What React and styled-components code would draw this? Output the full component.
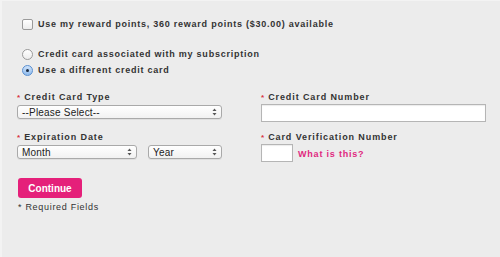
import React from "react";
import styled, { createGlobalStyle } from "styled-components";

const Global = createGlobalStyle`
  html, body { margin: 0; padding: 0; background: #ececec; }
  * { box-sizing: border-box; }
`;

const Page = styled.div`
  width: 500px;
  height: 257px;
  background: #ececec;
  border-left: 2px solid #f3f3f3;
  border-top: 1px solid #f3f3f3;
  padding: 17px 14px 0 15px;
  font-family: "Liberation Sans", Arial, sans-serif;
  color: #333;
  overflow: hidden;
`;

const OptionRow = styled.label`
  display: flex;
  align-items: center;
  height: 12px;
  padding-left: 5px;
  margin-top: ${(p) => p.$mt || 0}px;
  font-size: 9px;
  font-weight: bold;
  letter-spacing: 0.76px;
  color: #333;
  gap: 5px;
`;

const Box = styled.span`
  width: 11px;
  height: 11px;
  border: 1px solid #9a9a9a;
  border-radius: 2px;
  background: linear-gradient(#ffffff, #ececec);
  flex: none;
`;

const Radio = styled.span`
  width: 11px;
  height: 11px;
  border-radius: 50%;
  flex: none;
  display: flex;
  align-items: center;
  justify-content: center;
  border: 1px solid ${(p) => (p.$on ? "#5a8fd0" : "#9a9a9a")};
  background: ${(p) => (p.$on ? "linear-gradient(#cfe3fa, #8fbbed)" : "linear-gradient(#ffffff, #ececec)")};
  &::after {
    content: "";
    display: ${(p) => (p.$on ? "block" : "none")};
    width: 3px;
    height: 3px;
    border-radius: 50%;
    background: #1d2d44;
  }
`;

const Grid = styled.div`
  display: grid;
  grid-template-columns: 205px 225px;
  column-gap: 39px;
  margin-top: 15px;
`;

const Column = styled.div`
  display: flex;
  flex-direction: column;
`;

const Label = styled.div`
  height: 12px;
  line-height: 12px;
  margin-top: ${(p) => p.$mt || 0}px;
  font-size: 9px;
  font-weight: bold;
  letter-spacing: 0.9px;
  color: #333;
  white-space: nowrap;
`;

const Star = styled.span`
  color: #d8333f;
  font-size: 8px;
  margin-right: 4px;
  letter-spacing: 0;
`;

const SelectBox = styled.div`
  display: flex;
  align-items: center;
  justify-content: space-between;
  width: ${(p) => p.$w}px;
  height: 14px;
  margin-top: ${(p) => p.$mt || 0}px;
  padding: 0 4px 0 4px;
  border: 1px solid #a9a9a9;
  border-radius: 3px;
  background: linear-gradient(#ffffff, #f1f1f1);
  box-shadow: 0 1px 0 rgba(0, 0, 0, 0.06);
  font-size: 10px;
  letter-spacing: 0.2px;
  color: #222;
`;

const SelectRow = styled.div`
  display: flex;
  gap: 11px;
  margin-top: 2px;
`;

const TextInput = styled.div`
  width: ${(p) => p.$w}px;
  height: 18px;
  margin-top: ${(p) => p.$mt || 0}px;
  background: #fff;
  border: 1px solid #b5b5b5;
  box-shadow: inset 0 1px 1px rgba(0, 0, 0, 0.08);
  flex: none;
`;

const CvnRow = styled.div`
  display: flex;
  align-items: center;
  gap: 5px;
  margin-top: 1px;
`;

const HelpLink = styled.a`
  color: #e0287f;
  font-size: 9px;
  font-weight: bold;
  letter-spacing: 0.8px;
  text-decoration: none;
  margin-top: 1px;
`;

const Button = styled.button`
  display: block;
  width: 64px;
  height: 20px;
  margin: 16px 0 0 1px;
  padding: 0;
  border: none;
  border-radius: 3px;
  background: #e5207a;
  color: #fff;
  font-family: "Liberation Sans", Arial, sans-serif;
  font-size: 10px;
  font-weight: bold;
`;

const Note = styled.div`
  margin: 3px 0 0 1px;
  height: 12px;
  line-height: 12px;
  font-size: 9px;
  letter-spacing: 0.7px;
  color: #333;
`;

const Arrows = () => (
  <svg width="5" height="8" viewBox="0 0 5 8">
    <path d="M2.5 0.5 L4.5 3 L0.5 3 Z" fill="#555" />
    <path d="M2.5 7.5 L4.5 5 L0.5 5 Z" fill="#555" />
  </svg>
);

const Select = ({ w, mt, children }) => (
  <SelectBox $w={w} $mt={mt}>
    <span>{children}</span>
    <Arrows />
  </SelectBox>
);

export default function App() {
  return (
    <>
      <Global />
      <Page>
        <OptionRow>
          <Box />
          Use my reward points, 360 reward points ($30.00) available
        </OptionRow>
        <OptionRow $mt={18}>
          <Radio />
          Credit card associated with my subscription
        </OptionRow>
        <OptionRow $mt={4}>
          <Radio $on />
          Use a different credit card
        </OptionRow>
        <Grid>
          <Column>
            <Label>
              <Star>*</Star>Credit Card Type
            </Label>
            <Select w={205} mt={2}>--Please Select--</Select>
            <Label $mt={12}>
              <Star>*</Star>Expiration Date
            </Label>
            <SelectRow>
              <Select w={120}>Month</Select>
              <Select w={74}>Year</Select>
            </SelectRow>
          </Column>
          <Column>
            <Label>
              <Star>*</Star>Credit Card Number
            </Label>
            <TextInput $w={225} $mt={1} />
            <Label $mt={9}>
              <Star>*</Star>Card Verification Number
            </Label>
            <CvnRow>
              <TextInput $w={32} />
              <HelpLink href="#">What is this?</HelpLink>
            </CvnRow>
          </Column>
        </Grid>
        <Button>Continue</Button>
        <Note>* Required Fields</Note>
      </Page>
    </>
  );
}
